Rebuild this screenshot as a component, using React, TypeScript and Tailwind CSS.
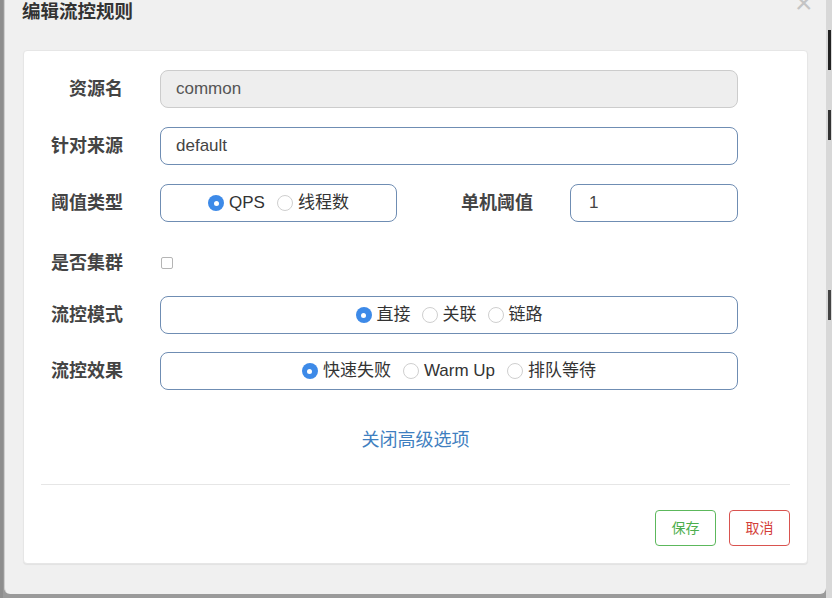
import React from "react";

const font = { fontFamily: '"Liberation Sans", "Noto Sans CJK SC", sans-serif' };

function Radio({ checked, label }: { checked?: boolean; label: string }) {
  return (
    <span className="flex items-center gap-[5px]">
      {checked ? (
        <span className="w-[16px] h-[16px] rounded-full bg-[#3d8ae8] flex items-center justify-center">
          <span className="w-[5px] h-[5px] rounded-full bg-white" />
        </span>
      ) : (
        <span className="w-[16px] h-[16px] rounded-full border border-[#cfcfcf] bg-white" />
      )}
      <span className="text-[17px] text-[#333]">{label}</span>
    </span>
  );
}

function Label({ children, w = "w-[99px]" }: { children: React.ReactNode; w?: string }) {
  return (
    <div className={`${w} shrink-0 text-right text-[18px] font-bold text-[#444]`}>{children}</div>
  );
}

export default function App() {
  return (
    <div className="w-[832px] h-[598px] bg-[#9a9a9a] relative overflow-hidden" style={font}>
      <div className="absolute left-0 top-0 w-[3px] h-full bg-[#8e8e8e]" />
      <div className="absolute right-0 top-0 w-[6px] h-full bg-[#d8d8d8]">
        <div className="w-[3px] ml-[2px] h-[40px] mt-[30px] bg-[#222]" />
        <div className="w-[3px] ml-[2px] h-[30px] mt-[40px] bg-[#333]" />
        <div className="w-[3px] ml-[2px] h-[30px] mt-[150px] bg-[#444]" />
      </div>
      <div className="absolute left-[4px] top-0 w-[822px] h-[594px] bg-[#f0f0f0] rounded-b-[6px] border-l border-[#d0d0d0]">
        <div className="relative h-[50px]">
          <div className="absolute left-[17px] top-[1px] text-[18.5px] font-bold text-[#333] leading-[22px]">编辑流控规则</div>
          <div className="absolute left-[790px] top-[-12px] text-[30px] text-[#c4c4c4] leading-[30px]">×</div>
        </div>
        <div className="ml-[18px] w-[785px] h-[514px] bg-white rounded-[4px] border border-[#e6e6e6] shadow-[0_1px_1px_rgba(0,0,0,0.06)] flex flex-col pt-[19px]">
          <div className="flex items-center h-[38px] pr-[69px]">
            <Label>资源名</Label>
            <div className="ml-[37px] flex-1 h-[38px] rounded-[8px] bg-[#eeeeee] border border-[#cccccc] flex items-center px-[15px] text-[17px] text-[#555]">common</div>
          </div>
          <div className="flex items-center h-[38px] pr-[69px] mt-[19px]">
            <Label>针对来源</Label>
            <div className="ml-[37px] flex-1 h-[38px] rounded-[8px] bg-white border border-[#6f8db3] flex items-center px-[15px] text-[17px] text-[#444]">default</div>
          </div>
          <div className="flex items-center h-[38px] pr-[69px] mt-[19px]">
            <Label>阈值类型</Label>
            <div className="ml-[37px] w-[237px] h-[38px] rounded-[8px] bg-white border border-[#6f8db3] flex items-center justify-center gap-[12px]">
              <Radio checked label="QPS" />
              <Radio label="线程数" />
            </div>
            <Label w="w-[136px]">单机阈值</Label>
            <div className="ml-[37px] flex-1 h-[38px] rounded-[8px] bg-white border border-[#6f8db3] flex items-center px-[18px] text-[17px] text-[#444]">1</div>
          </div>
          <div className="flex items-center h-[38px] pr-[69px] mt-[22px]">
            <Label>是否集群</Label>
            <div className="ml-[38px] w-[12px] h-[12px] rounded-[2px] border border-[#b5b5b5] bg-white" />
          </div>
          <div className="flex items-center h-[38px] pr-[69px] mt-[14px]">
            <Label>流控模式</Label>
            <div className="ml-[37px] flex-1 h-[38px] rounded-[8px] bg-white border border-[#6f8db3] flex items-center justify-center gap-[11px]">
              <Radio checked label="直接" />
              <Radio label="关联" />
              <Radio label="链路" />
            </div>
          </div>
          <div className="flex items-center h-[38px] pr-[69px] mt-[18px]">
            <Label>流控效果</Label>
            <div className="ml-[37px] flex-1 h-[38px] rounded-[8px] bg-white border border-[#6f8db3] flex items-center justify-center gap-[12px]">
              <Radio checked label="快速失败" />
              <Radio label="Warm Up" />
              <Radio label="排队等待" />
            </div>
          </div>
          <div className="mt-[38px] text-center text-[18px] text-[#3f7fc0] leading-[24px]">关闭高级选项</div>
          <div className="mx-[17px] mt-[32px] h-px bg-[#e6e6e6]" />
          <div className="flex justify-end gap-[13px] pr-[17px] mt-[25px]">
            <div className="w-[61px] h-[36px] rounded-[4px] border border-[#5cb85c] text-[#4cae4c] text-[14px] flex items-center justify-center">保存</div>
            <div className="w-[61px] h-[36px] rounded-[4px] border border-[#d9534f] text-[#d43f3a] text-[14px] flex items-center justify-center">取消</div>
          </div>
        </div>
      </div>
    </div>
  );
}
